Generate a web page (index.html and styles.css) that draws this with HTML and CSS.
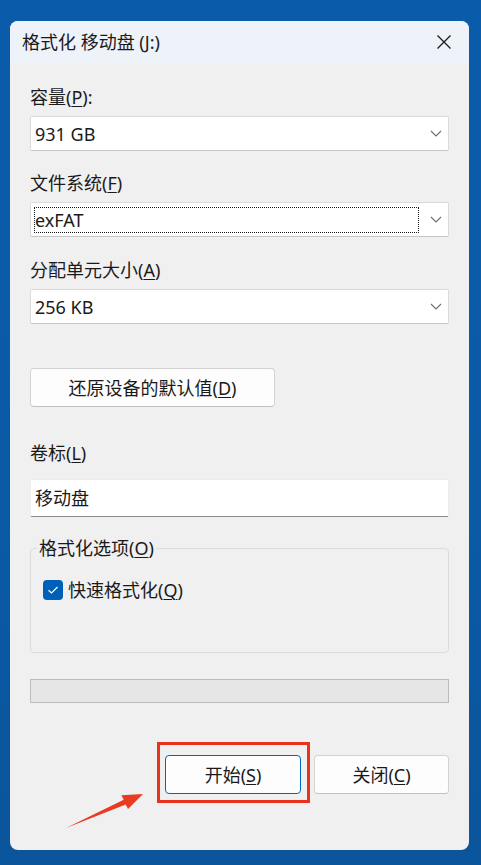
FILE: index.html
```html
<!DOCTYPE html>
<html lang="zh-CN">
<head>
<meta charset="utf-8">
<title>格式化 移动盘 (J:)</title>
<link rel="stylesheet" href="styles.css">
</head>
<body>
<div class="window">
  <div class="titlebar">
    <span class="title">格式化 移动盘 (J:)</span>
    <svg class="close-x" width="16" height="16" viewBox="0 0 16 16"><path d="M1.5 1.5 L14.5 14.5 M14.5 1.5 L1.5 14.5" stroke="#1c1c1c" stroke-width="1.3" fill="none"/></svg>
  </div>
  <div class="content">
    <div class="label">容量(<u>P</u>):</div>
    <div class="combo"><span class="combo-text">931 GB</span><svg class="chev" width="12" height="7" viewBox="0 0 12 7"><path d="M1 1 L6 6 L11 1" stroke="#6e6e6e" stroke-width="1.1" fill="none"/></svg></div>

    <div class="label l2">文件系统(<u>F</u>)</div>
    <div class="combo combo-focus"><span class="focus-rect"><span class="combo-text">exFAT</span></span><svg class="chev" width="12" height="7" viewBox="0 0 12 7"><path d="M1 1 L6 6 L11 1" stroke="#6e6e6e" stroke-width="1.1" fill="none"/></svg></div>

    <div class="label l3">分配单元大小(<u>A</u>)</div>
    <div class="combo"><span class="combo-text">256 KB</span><svg class="chev" width="12" height="7" viewBox="0 0 12 7"><path d="M1 1 L6 6 L11 1" stroke="#6e6e6e" stroke-width="1.1" fill="none"/></svg></div>

    <div class="btn btn-reset">还原设备的默认值(<u>D</u>)</div>

    <div class="label l4">卷标(<u>L</u>)</div>
    <div class="textbox">移动盘</div>

    <fieldset class="group">
      <legend>格式化选项(<u>O</u>)</legend>
      <div class="check-row">
        <span class="checkbox"><svg width="12" height="10" viewBox="0 0 12 10"><path d="M1.5 5.2 L4.5 8 L10.5 2" stroke="#ffffff" stroke-width="1.2" fill="none"/></svg></span>
        <span class="check-label">快速格式化(<u>Q</u>)</span>
      </div>
    </fieldset>

    <div class="progress"></div>

    <div class="actions">
      <div class="btn btn-start">开始(<u>S</u>)</div>
      <div class="btn btn-close">关闭(<u>C</u>)</div>
    </div>
  </div>
</div>
<svg class="annot" width="481" height="865" viewBox="0 0 481 865">
  <rect x="158.5" y="743.5" width="150" height="58" fill="none" stroke="#e8321e" stroke-width="3"/>
  <polygon points="66,828 123.7,799.8 121.4,795.2 143,794 128,809 125.7,804.4" fill="#ea3a22"/>
</svg>
</body>
</html>
```

FILE: styles.css
```css
* {
  box-sizing: border-box;
}

html, body {
  margin: 0;
  padding: 0;
}

body {
  width: 481px;
  height: 865px;
  overflow: hidden;
  background: linear-gradient(180deg, #0a5cab 0%, #0a5aa6 60%, #0a559c 100%);
  padding: 21px 0 0 10px;
  font-family: "Noto Sans", "Noto Sans CJK SC", sans-serif;
  color: #1a1a1a;
  position: relative;
}

u {
  text-decoration: underline;
  text-decoration-thickness: 1px;
  text-underline-offset: 2px;
}

.window {
  width: 459px;
  height: 829px;
  background: #f0f0f0;
  border-radius: 8px;
  overflow: hidden;
}

.titlebar {
  height: 42px;
  background: #eef2f9;
  display: flex;
  align-items: center;
  justify-content: space-between;
  padding: 0 17px 0 12px;
}

.title {
  font-size: 18px;
  line-height: 24px;
  color: #1a1a1a;
}

.close-x {
  display: block;
}

.content {
  padding: 22px 20px 0 20px;
}

.label {
  font-size: 18px;
  line-height: 24px;
  height: 24px;
  padding-left: 0;
  white-space: nowrap;
}

.l2 { margin-top: 20px; }
.l3 { margin-top: 21px; }
.l4 { margin-top: 34px; }

.combo {
  margin-top: 7px;
  height: 35px;
  background: #ffffff;
  border: 1px solid #dadada;
  border-bottom-color: #c6c6c6;
  border-radius: 2px;
  display: flex;
  align-items: center;
  justify-content: space-between;
  padding: 0 6px 0 4px;
}

.combo-text {
  font-size: 18px;
  line-height: 24px;
  white-space: nowrap;
}

.combo-focus {
  padding-left: 3px;
}

.focus-rect {
  width: 385px;
  height: 26px;
  border: 1px dotted #1a1a1a;
  display: flex;
  align-items: center;
  padding-left: 0;
}

.chev {
  display: block;
}

.btn {
  height: 39px;
  background: #fdfdfd;
  border: 1px solid #d3d3d3;
  border-bottom-color: #c2c2c2;
  border-radius: 4px;
  font-size: 18px;
  line-height: 24px;
  display: flex;
  align-items: center;
  justify-content: center;
  white-space: nowrap;
}

.btn-reset {
  margin-top: 44px;
  width: 245px;
}

.textbox {
  margin-top: 14px;
  height: 38px;
  background: #ffffff;
  border: 1px solid #ececec;
  border-bottom: 1px solid #8a8a8a;
  border-radius: 2px;
  font-size: 18px;
  line-height: 24px;
  padding: 6px 0 0 4px;
}

.group {
  margin: 19px 0 0 0;
  padding: 0 6px 50px 12px;
  border: 1px solid #dcdcdc;
  border-radius: 4px;
  min-width: 0;
}

.group legend {
  font-size: 18px;
  line-height: 24px;
  padding: 0 2px;
  margin-left: -6px;
}

.check-row {
  margin-top: 18px;
  height: 24px;
  display: flex;
  align-items: center;
}

.checkbox {
  width: 20px;
  height: 20px;
  border-radius: 4px;
  background: #005fb8;
  display: flex;
  align-items: center;
  justify-content: center;
  margin-right: 5px;
}

.checkbox svg {
  display: block;
}

.check-label {
  font-size: 18px;
  line-height: 24px;
  white-space: nowrap;
}

.progress {
  margin-top: 26px;
  height: 24px;
  background: #e6e6e6;
  border: 1px solid #bcbcbc;
}

.actions {
  margin-top: 52px;
  display: flex;
  justify-content: flex-end;
  gap: 13px;
}

.btn-start {
  width: 136px;
  border-color: #0067c0;
  border-bottom-color: #0067c0;
}

.btn-close {
  width: 135px;
}

.annot {
  position: absolute;
  left: 0;
  top: 0;
  pointer-events: none;
}
```
